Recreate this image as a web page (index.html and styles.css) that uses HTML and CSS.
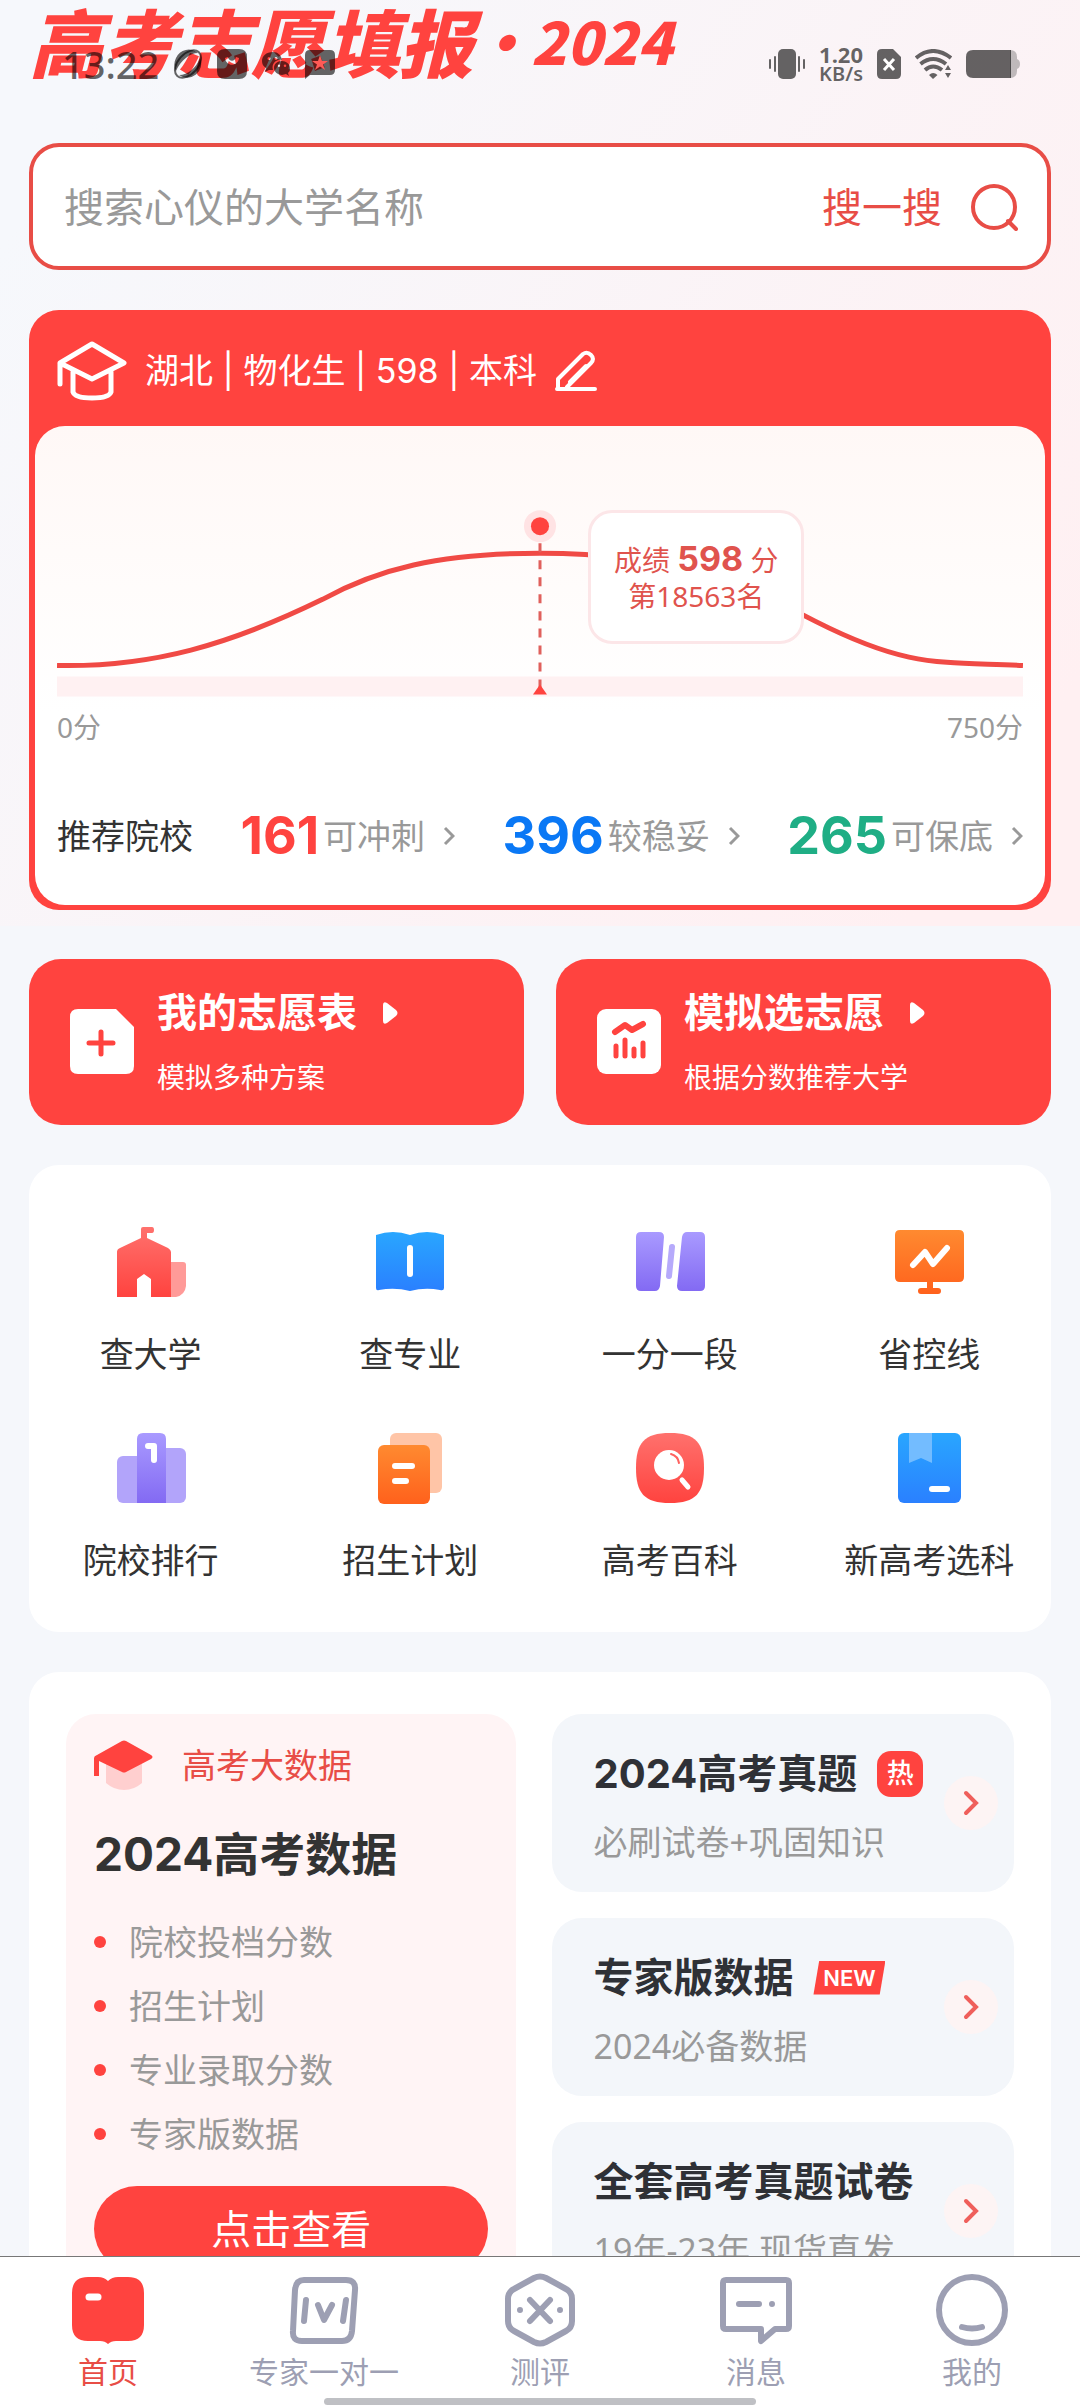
FILE: index.html
```html
<!DOCTYPE html>
<html lang="zh-CN">
<head>
<meta charset="utf-8">
<meta name="viewport" content="width=device-width, initial-scale=1">
<title>高考志愿填报</title>
<link rel="stylesheet" href="styles.css">
</head>
<body>
<svg class="defs" width="0" height="0" aria-hidden="true">
  <defs>
    <linearGradient id="red" x1="0" y1="0" x2="0" y2="1"><stop offset="0" stop-color="#ff716d"/><stop offset="1" stop-color="#ff433f"/></linearGradient>
    <linearGradient id="blue" x1="0" y1="0" x2="0" y2="1"><stop offset="0" stop-color="#29a6ff"/><stop offset="1" stop-color="#2a80ff"/></linearGradient>
    <linearGradient id="violet" x1="0" y1="0" x2="0" y2="1"><stop offset="0" stop-color="#a99aff"/><stop offset="1" stop-color="#836af3"/></linearGradient>
    <linearGradient id="orange" x1="0" y1="0" x2="0" y2="1"><stop offset="0" stop-color="#ff8a30"/><stop offset="1" stop-color="#ff611c"/></linearGradient>
  </defs>
</svg>

<div class="status">
  <div class="status-side">
    <time class="clock">13:22</time>
    <svg width="30" height="30" viewBox="0 0 30 30"><ellipse cx="15" cy="15" rx="10" ry="16" transform="rotate(42 15 15)" fill="none" stroke="currentColor" stroke-width="2"/><path fill-rule="evenodd" d="M3 9A14 14 0 0 1 25 4C17 4 8 11 3 22A14 14 0 0 1 3 9ZM27 9A14 14 0 0 1 6 26C15 26 23 19 27 9Z"/></svg>
    <svg width="30" height="30" viewBox="0 0 30 30"><path fill-rule="evenodd" d="M8 0H22Q30 0 30 8V22Q30 30 22 30H8Q0 30 0 22V8Q0 0 8 0ZM8 9C9 18 21 18 22 9L19 8C18 13 12 13 11 8Z"/></svg>
    <svg width="30" height="30" viewBox="0 0 30 30"><path fill-rule="evenodd" d="M12 3C5 3 1 7 1 12C1 15 2 17 5 19L4 23L8 21L12 21C10 14 16 10 21 11C20 6 17 3 12 3ZM8 8A1.5 1.5 0 1 1 8 11A1.5 1.5 0 1 1 8 8ZM15 8A1.5 1.5 0 1 1 15 11A1.5 1.5 0 1 1 15 8ZM21 12C16 12 13 15 13 19C13 23 17 26 21 26L25 25L28 27L27 24C29 22 29 21 29 19C29 15 25 12 21 12ZM18 15.500A1.200 1.200 0 1 1 18 18A1.200 1.200 0 1 1 18 15.500ZM24 15.500A1.200 1.200 0 1 1 24 18A1.200 1.200 0 1 1 24 15.500Z"/></svg>
    <svg class="msg" width="30" height="30" viewBox="0 0 30 30"><path d="M5 1H25Q30 1 30 6V21Q30 26 25 26H5L0 30V6Q0 1 5 1Z"/><path fill="#ff5a56" d="M15 6L17 12H23L18 15.500L20 21L15 17.500L10 21L12 15.500L7 12H13Z"/></svg>
  </div>
  <div class="status-side status-right">
    <svg width="36" height="32" viewBox="0 0 36 32"><rect x="9" y="1" width="18" height="30" rx="5"/><path stroke="currentColor" stroke-width="2" stroke-linecap="round" d="M6 9V23M1 12V20M30 9V23M35 12V20"/></svg>
    <div class="speed"><b>1.20</b><span>KB/s</span></div>
    <svg width="24" height="30" viewBox="0 0 24 30"><path d="M5 0H16L24 8V25Q24 30 19 30H5Q0 30 0 25V5Q0 0 5 0Z"/><path stroke="#fff" stroke-width="3" d="M7 10L17 21M17 10L7 21"/></svg>
    <svg width="37" height="30" viewBox="0 0 37 30"><path d="M1 9Q18 -5 36 9M5.500 15Q18 5 31 15M10 21Q18 14 27 21" fill="none" stroke="currentColor" stroke-width="4"/><path d="M14 26Q18 22 22.500 26L18 30ZM30 21L33 16L36 21ZM30 24H36L33 29Z"/></svg>
    <svg width="54" height="28" viewBox="0 0 54 28"><path opacity=".4" d="M44 0Q51 0 51 7V9Q54 10 54 14Q54 18 51 19V21Q51 28 44 28Z"/><path d="M7 0H45V28H7Q0 28 0 21V7Q0 0 7 0Z"/></svg>
  </div>
</div>

<main class="page">
  <section class="hero">
    <h1 class="brand">高考志愿填报<span class="brand-year">·2024</span></h1>
    <form class="search">
      <input type="text" aria-label="搜索大学" placeholder="搜索心仪的大学名称">
      <button type="button">搜一搜
        <svg width="48" height="48" viewBox="0 0 48 48" fill="none" stroke="currentColor" stroke-width="4" stroke-linecap="round"><circle cx="24" cy="24" r="21"/><path d="M38 38L46 46"/></svg>
      </button>
    </form>

    <section class="score">
      <header class="score-head">
        <svg width="70" height="60" viewBox="0 0 70 60" fill="none" stroke="#fff" stroke-width="5" stroke-linejoin="round" stroke-linecap="round"><path d="M35 3L67 22L35 38L3 22ZM3 22V43M16 31V51Q18 57 35 57Q52 57 54 51V31"/></svg>
        <span class="profile">湖北 | 物化生 | 598 | 本科</span>
        <button type="button" class="edit" aria-label="编辑"><svg width="42" height="42" viewBox="0 0 42 42" fill="none" stroke="#fff" stroke-width="4" stroke-linejoin="round" stroke-linecap="round"><path d="M2 39H40M3 38V29L28 4Q32 1 36 5Q40 9 36 13L12 37M15 32L31 16"/></svg></button>
      </header>
      <div class="score-body">
        <div class="chart">
          <svg class="curve" viewBox="0 0 964 271" fill="none">
            <rect x="0" y="250" width="964" height="20" fill="#fff1f2"/>
            <path d="M0 239C95 241 173 218 265 173C320 143 380 127 482 127C620 127 690 160 757 195C850 242 880 235 964 239" stroke="#f04a45" stroke-width="5"/>
            <circle cx="482" cy="100" r="16" fill="#ffe3e4"/><circle cx="482" cy="100" r="9" fill="#ff433f"/>
            <path d="M482 117V262" stroke="#e0605c" stroke-width="3" stroke-dasharray="9 8"/>
            <path d="M482 258L489 268H475Z" fill="#ff433f"/>
          </svg>
          <div class="tip"><span>成绩 <b>598</b> 分</span><span>第18563名</span></div>
        </div>
        <div class="axis"><span>0分</span><span>750分</span></div>
        <div class="picks">
          <span class="picks-label">推荐院校</span>
          <a href="#reach" class="pick"><b class="c-red">161</b>可冲刺<svg width="12" height="20" viewBox="0 0 12 20"><path d="M2 2L10 10L2 18"/></svg></a>
          <a href="#match" class="pick"><b class="c-blue">396</b>较稳妥<svg width="12" height="20" viewBox="0 0 12 20"><path d="M2 2L10 10L2 18"/></svg></a>
          <a href="#safe" class="pick"><b class="c-green">265</b>可保底<svg width="12" height="20" viewBox="0 0 12 20"><path d="M2 2L10 10L2 18"/></svg></a>
        </div>
      </div>
    </section>
  </section>

  <div class="content">
    <div class="actions">
      <a href="#plan" class="action">
        <svg width="66" height="66" viewBox="0 0 66 66"><path fill="#fff" d="M9 0H47L65 18V57Q65 65 57 65H9Q1 65 1 57V8Q1 0 9 0Z"/><path d="M32 23V45M20 34H44" stroke="#ff433f" stroke-width="5" stroke-linecap="round"/></svg>
        <span class="action-text"><strong>我的志愿表<svg width="16" height="22" viewBox="0 0 16 22"><path fill="#fff" d="M0 3Q0 -1 4 1L13 8Q16 11 13 14L4 21Q0 23 0 19Z"/></svg></strong><span>模拟多种方案</span></span>
      </a>
      <a href="#simulate" class="action">
        <svg width="66" height="66" viewBox="0 0 66 66"><rect x="1" y="0" width="64" height="65" rx="9" fill="#fff"/><path d="M19 23L29 16L36 21L47 15" stroke="#ff433f" stroke-width="6" stroke-linecap="round" stroke-linejoin="round" fill="none"/><path d="M20 37V47M29 31V47M38 40V47M47 34V47" stroke="#ff433f" stroke-width="5" stroke-linecap="round"/></svg>
        <span class="action-text"><strong>模拟选志愿<svg width="16" height="22" viewBox="0 0 16 22"><path fill="#fff" d="M0 3Q0 -1 4 1L13 8Q16 11 13 14L4 21Q0 23 0 19Z"/></svg></strong><span>根据分数推荐大学</span></span>
      </a>
    </div>

    <nav class="tools" aria-label="工具">
      <a href="#t1"><svg width="72" height="72" viewBox="0 0 72 72"><path fill="#ff9a98" d="M54 36H68Q71 36 71 39V60Q70 69 61 71H54Z"/><path fill="url(#red)" d="M2 71V26Q2 23 5 22L26 12V3Q26 1 28 1H37Q39 1 39 4T37 7H32V12L53 22Q56 24 56 26V71H36V53L29 48L22 53V71Z"/></svg>查大学</a>
      <a href="#t2"><svg width="72" height="72" viewBox="0 0 72 72"><path fill="url(#blue)" d="M2 9Q19 3 36 9Q53 3 70 9V62Q70 65 66 64Q51 61 36 65Q21 61 5 64Q2 65 2 62Z"/><path d="M36 22V48" stroke="#fff" stroke-width="6" stroke-linecap="round"/></svg>查专业</a>
      <a href="#t3"><svg width="72" height="72" viewBox="0 0 72 72"><path fill="url(#violet)" d="M7 6H25Q30 6 30 11L26 60Q25 65 21 65H7Q2 65 2 60V11Q2 6 7 6ZM53 6H66Q71 6 71 11V60Q71 65 66 65H48Q43 65 43 60L48 11Q49 6 53 6Z"/><path d="M38 21L35 50" stroke="#b6aafb" stroke-width="6" stroke-linecap="round"/></svg>一分一段</a>
      <a href="#t4"><svg width="72" height="72" viewBox="0 0 72 72"><path fill="url(#orange)" d="M7 4H66Q71 4 71 9V51Q71 56 66 56H40V62H45Q48 62 48 65T45 68H28Q25 68 25 65T28 62H34V56H7Q2 56 2 51V9Q2 4 7 4Z"/><path d="M20 39L32 26L40 38L54 22" stroke="#fff" stroke-width="6" stroke-linecap="round" stroke-linejoin="round" fill="none"/></svg>省控线</a>
      <a href="#t5"><svg width="72" height="72" viewBox="0 0 72 72"><rect x="2" y="24" width="30" height="47" rx="6" fill="#b2a4fa"/><rect x="42" y="16" width="29" height="55" rx="6" fill="#b2a4fa"/><path fill="url(#violet)" d="M22 71V7Q22 1 28 1H45Q51 1 51 7V71Z"/><path d="M33 14H39V28" stroke="#fff" stroke-width="6" fill="none" stroke-linecap="round" stroke-linejoin="round"/></svg>院校排行</a>
      <a href="#t6"><svg width="72" height="72" viewBox="0 0 72 72"><rect x="16" y="1" width="52" height="60" rx="6" fill="#ffc5a7"/><rect x="4" y="13" width="52" height="59" rx="6" fill="url(#orange)"/><path d="M21 34H38M21 49H32" stroke="#fff" stroke-width="6" stroke-linecap="round"/></svg>招生计划</a>
      <a href="#t7"><svg width="72" height="72" viewBox="0 0 72 72"><path fill="url(#red)" d="M36 1C62 1 70 11 70 36S62 71 36 71S2 61 2 36S10 1 36 1Z"/><circle cx="35" cy="33" r="15" fill="#fff"/><path d="M48 48L54 55" stroke="#fff" stroke-width="5" stroke-linecap="round"/><path d="M37 22Q44 24 45 31" stroke="#ff625f" stroke-width="2" fill="none" stroke-linecap="round"/></svg>高考百科</a>
      <a href="#t8"><svg width="72" height="72" viewBox="0 0 72 72"><rect x="5" y="1" width="63" height="70" rx="6" fill="url(#blue)"/><path fill="#73bcff" d="M16 1H39V31L28 26L16 31Z"/><path d="M39 57H54" stroke="#fff" stroke-width="6" stroke-linecap="round"/></svg>新高考选科</a>
    </nav>

    <div class="feature">
      <section class="data">
        <header class="data-head"><svg width="60" height="50" viewBox="0 0 60 50"><path fill="#ffcfcf" d="M12 24H48V43Q40 50 30 50T12 43Z"/><path fill="#ff433f" d="M28 1Q30 0 32 1L57 15Q60 17 57 19L32 32Q30 33 28 32L5 21V36H0V18Q0 16 3 15Z"/></svg>高考大数据</header>
        <h2>2024高考数据</h2>
        <ul><li>院校投档分数</li><li>招生计划</li><li>专业录取分数</li><li>专家版数据</li></ul>
        <button type="button" class="view">点击查看</button>
      </section>
      <div class="offers">
        <a href="#o1" class="offer"><span class="offer-text"><strong>2024高考真题<i class="hot">热</i></strong><span>必刷试卷+巩固知识</span></span><span class="go"><svg width="16" height="26" viewBox="0 0 16 26"><path d="M3 3L13 13L3 23"/></svg></span></a>
        <a href="#o2" class="offer"><span class="offer-text"><strong>专家版数据<i class="new">NEW</i></strong><span>2024必备数据</span></span><span class="go"><svg width="16" height="26" viewBox="0 0 16 26"><path d="M3 3L13 13L3 23"/></svg></span></a>
        <a href="#o3" class="offer"><span class="offer-text"><strong>全套高考真题试卷</strong><span>19年-23年 现货直发</span></span><span class="go"><svg width="16" height="26" viewBox="0 0 16 26"><path d="M3 3L13 13L3 23"/></svg></span></a>
      </div>
    </div>
  </div>
</main>

<nav class="tabs" aria-label="主导航">
  <a href="#home" class="active"><svg width="76" height="76" viewBox="0 0 76 76"><path fill="#ff433f" d="M18 5H28Q34 5 38 9Q42 5 48 5H58Q74 5 74 21V53Q74 69 58 69H46Q41 69 38 72Q35 69 30 69H18Q2 69 2 53V21Q2 5 18 5Z"/><path d="M19 25H28" stroke="#fff" stroke-width="7" stroke-linecap="round"/></svg>首页</a>
  <a href="#expert"><svg width="76" height="76" viewBox="0 0 76 76"><path d="M18 8H60Q70 8 69 18L66 59Q65 69 56 69H16Q6 69 7 59L9 18Q10 8 18 8Z"/><path d="M20 28L18 49M32 33L38 48L46 33M60 28L57 49"/></svg>专家一对一</a>
  <a href="#test"><svg width="76" height="76" viewBox="0 0 76 76"><path d="M32 6Q38 3 44 6L64 17Q70 20 70 27V49Q70 56 64 59L44 70Q38 73 32 70L12 59Q6 56 6 49V27Q6 20 12 17Z"/><path d="M28 28L48 49M48 28L28 49M18 38V38M58 38V38"/></svg>测评</a>
  <a href="#message"><svg width="76" height="76" viewBox="0 0 76 76"><path d="M8 8H68Q71 8 71 11V54Q71 57 68 57H57L43 69V57H8Q5 57 5 54V11Q5 8 8 8Z"/><path d="M21 32H41M54 32V32"/></svg>消息</a>
  <a href="#me"><svg width="76" height="76" viewBox="0 0 76 76"><circle cx="38" cy="38" r="33"/><path d="M28 55Q38 58 48 55"/></svg>我的</a>
  <span class="indicator"></span>
</nav>
</body>
</html>
```
FILE: styles.css
```css
* { box-sizing: border-box; }
html, body { height: 100%; }
body {
  margin: 0;
  display: flex;
  flex-direction: column;
  position: relative;
  background: #f5f7fb;
  color: #333;
  font-family: "Noto Sans", "Noto Sans CJK SC", sans-serif;
  font-size: 34px;
  line-height: 48px;
}
a { color: inherit; text-decoration: none; }
button, input { font: inherit; border: 0; padding: 0; background: none; }
svg { display: block; flex: none; }
b, strong, h2 { font-family: "Inter", "Noto Sans CJK SC", sans-serif; font-weight: 700; }
.defs { position: absolute; }

/* System bar floats above the scrolling page */
.status {
  position: absolute;
  inset: 43px 60px auto 62px;
  z-index: 2;
  display: flex;
  justify-content: space-between;
  color: rgba(0, 0, 0, 0.6);
}
.status svg { fill: currentColor; }
.status-side { display: flex; align-items: center; gap: 14px; height: 42px; }
.clock { font-size: 38px; font-weight: 500; line-height: 42px; }
.speed { display: grid; font-family: "Noto Sans", sans-serif; font-size: 20px; line-height: 20px; font-weight: 600; text-align: center; }
.speed b { font-family: inherit; font-size: 22px; }

.page { flex: 1; min-height: 0; overflow-y: auto; scrollbar-width: none; }
.hero { padding: 0 29px 16px; background: linear-gradient(125deg, #f6f8fc 10%, #fff0f2 90%); }
.brand {
  display: flex;
  align-items: center;
  height: 80px;
  margin: 0 0 63px;
  font-family: "Noto Sans CJK SC", sans-serif;
  font-size: 74px;
  font-weight: 900;
  font-style: italic;
  line-height: 80px;
  color: #ff433f;
  white-space: nowrap;
}
.brand-year { font-size: 58px; }

.search {
  display: flex;
  align-items: center;
  height: 127px;
  padding: 0 29px 0 31px;
  border: 4px solid #e84d46;
  border-radius: 30px;
  background: #fff;
  font-size: 40px;
}
.search input { flex: 1; min-width: 0; outline: 0; color: #333; }
.search input::placeholder { color: #999; opacity: 1; }
.search button { display: flex; align-items: center; gap: 28px; color: #e84d46; }

.score { margin-top: 40px; padding: 0 6px 5px; border-radius: 30px; background: #ff433f; }
.score-head { display: flex; align-items: center; gap: 18px; height: 116px; padding: 6px 22px 0; color: #fff; }
.profile { font-family: "Inter", "Noto Sans CJK SC", sans-serif; }
.score-body { padding: 0 22px; border-radius: 30px; background: linear-gradient(#fff8f6, #fff 60%); }
.edit { color: #fff; }
.chart { position: relative; }
.curve { width: 100%; height: auto; }
.tip {
  position: absolute;
  left: 55%;
  top: 84px;
  display: flex;
  flex-direction: column;
  justify-content: center;
  align-items: center;
  width: 216px;
  height: 134px;
  border: 3px solid #fce6e8;
  border-radius: 24px;
  background: #fff;
  color: #e0534d;
  font-size: 28px;
  line-height: 36px;
  white-space: nowrap;
}
.tip b { font-size: 34px; }
.axis { display: flex; justify-content: space-between; padding-top: 5px; color: #999; font-size: 28px; }
.picks { display: flex; justify-content: space-between; align-items: center; padding: 53px 0 37px; line-height: 64px; }
.pick { display: flex; align-items: center; color: #999; }
.pick b { margin-right: 4px; font-size: 52px; }
.pick svg { margin-left: 18px; fill: none; stroke: #999; stroke-width: 3; }
.c-red { color: #ff433f; }
.c-blue { color: #0a78f5; }
.c-green { color: #1fae85; }

.content { padding: 33px 29px 0; display: grid; gap: 40px; }
.actions { display: grid; grid-template-columns: 1fr 1fr; gap: 32px; }
.action { display: flex; align-items: center; gap: 22px; height: 166px; padding: 0 40px; border-radius: 32px; background: #ff433f; color: #fff; }
.action-text { display: grid; gap: 16px; padding-top: 6px; font-size: 28px; }
.action strong { display: flex; align-items: center; gap: 26px; font-size: 40px; }

.tools { display: grid; grid-template-columns: repeat(4, 25.4%); justify-content: center; row-gap: 54px; padding: 61px 0 48px; border-radius: 30px; background: #fff; }
.tools a { display: flex; flex-direction: column; align-items: center; gap: 32px; white-space: nowrap; }

.feature { display: grid; grid-template-columns: 450fr 461fr; gap: 36px; padding: 42px 37px; border-radius: 30px; background: #fff; }
.data { padding: 26px 28px; border-radius: 30px; background: #fff4f5; }
.data-head { display: flex; align-items: center; gap: 28px; color: #e84d46; }
.data h2 { margin: 36px 0; font-size: 46px; line-height: 56px; }
.data ul { display: grid; gap: 16px; margin: 0; padding: 0; list-style: none; color: #999; }
.data li { display: flex; align-items: center; gap: 23px; }
.data li::before { content: ""; width: 12px; height: 12px; border-radius: 50%; background: #ff433f; }
.view { width: 100%; height: 86px; margin-top: 28px; border-radius: 43px; background: #ff433f; color: #fff; font-size: 40px; }

.offers { display: grid; gap: 26px; align-content: start; }
.offer { display: flex; align-items: center; justify-content: space-between; height: 178px; padding: 0 16px 0 41px; border-radius: 30px; background: #f3f6fa; white-space: nowrap; }
.offer-text { display: grid; gap: 20px; padding-top: 10px; color: #999; }
.offer strong { display: flex; align-items: center; gap: 20px; font-size: 40px; color: #2f3136; }
.hot, .new { font-style: normal; font-weight: 500; color: #fff; }
.hot { width: 46px; border-radius: 14px; background: #ff433f; font-size: 27px; line-height: 46px; text-align: center; }
.new { width: 72px; background: #ff433f; clip-path: polygon(8% 0, 100% 0, 92% 100%, 0 100%); font-size: 22px; font-weight: 600; line-height: 34px; text-align: center; }
.go { display: grid; place-items: center; flex: none; width: 54px; height: 54px; border-radius: 50%; background: #fdf4f4; }
.go svg { fill: none; stroke: #ef5f5b; stroke-width: 4; stroke-linecap: round; }

.tabs { position: relative; display: grid; grid-template-columns: repeat(5, 1fr); padding: 15px 0 12px; border-top: 1px solid #777; background: #fff; color: #9d9fb3; font-size: 30px; }
.tabs a { display: flex; flex-direction: column; align-items: center; }
.tabs a svg { fill: none; stroke: currentColor; stroke-width: 6; stroke-linecap: round; stroke-linejoin: round; }
.tabs .active { color: #e84d46; }
.tabs .active svg { stroke: none; }
.indicator { position: absolute; left: 30%; right: 30%; bottom: 3px; height: 7px; border-radius: 4px; background: #bfc0c4; }
```
